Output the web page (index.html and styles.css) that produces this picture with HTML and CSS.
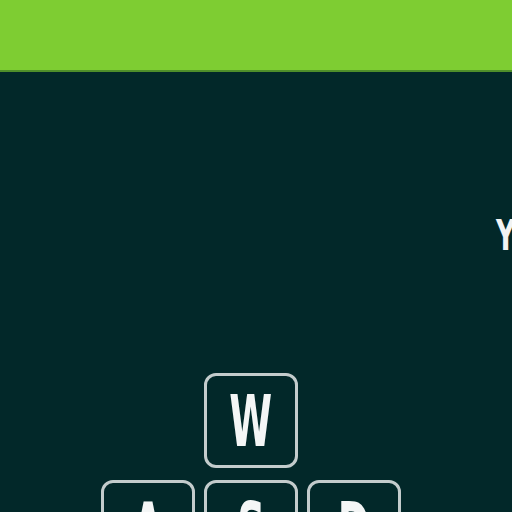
FILE: index.html
```html
<!DOCTYPE html>
<html>
<head>
<meta charset="utf-8">
<link rel="stylesheet" href="styles.css">
</head>
<body>
<header class="topbar"></header>
<main class="stage">
  <div class="caption"><span class="caption-text">YOU</span></div>
  <div class="keys">
    <div class="row"><div class="key"><span class="glyph">W</span></div></div>
    <div class="row">
      <div class="key"><span class="glyph">A</span></div>
      <div class="key"><span class="glyph">S</span></div>
      <div class="key"><span class="glyph">D</span></div>
    </div>
  </div>
</main>
</body>
</html>
```
FILE: styles.css
```css
html, body {
  margin: 0;
  padding: 0;
  width: 512px;
  height: 512px;
  overflow: hidden;
  background: #022829;
  font-family: "DejaVu Sans Condensed", "DejaVu Sans", sans-serif;
}
.topbar {
  height: 70px;
  background: #7ecd32;
  border-bottom: 2px solid #4f8f2a;
}
.stage {
  display: flex;
  flex-direction: column;
  width: 512px;
  overflow: hidden;
}
.caption {
  padding-top: 146px;
  padding-left: 496px;
  height: 36px;
  white-space: nowrap;
  color: #f2f4f4;
  font-weight: bold;
  font-size: 42px;
  line-height: 36px;
}
.caption-text {
  display: inline-block;
  transform: scaleX(0.7);
  transform-origin: left center;
}
.keys {
  margin-top: 119px;
  display: flex;
  flex-direction: column;
  align-items: center;
  gap: 12px;
  padding-right: 10px;
}
.row {
  display: flex;
  gap: 9px;
}
.key {
  width: 88px;
  height: 89px;
  border: 3px solid #c3cccc;
  border-radius: 12px;
  display: flex;
  align-items: center;
  justify-content: center;
  color: #f4f6f6;
  font-weight: bold;
  font-size: 72px;
  line-height: 1;
}
.glyph {
  display: inline-block;
  transform: scaleX(0.6);
}
```
